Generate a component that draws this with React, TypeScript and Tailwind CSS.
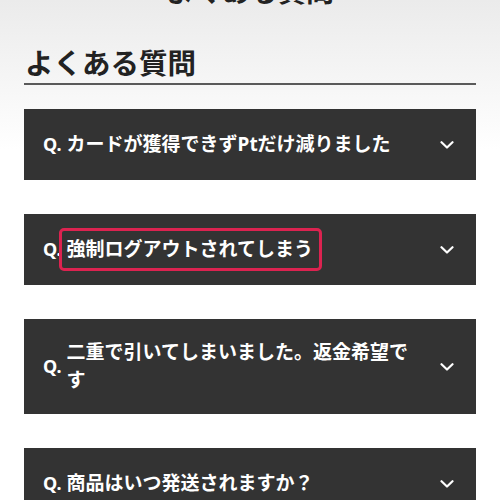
const faqs = [
  "カードが獲得できずPtだけ減りました",
  "強制ログアウトされてしまう",
  "二重で引いてしまいました。返金希望です",
  "商品はいつ発送されますか？",
]

function Chevron() {
  return (
    <svg width="14" height="8" viewBox="0 0 14 8" fill="none" className="shrink-0">
      <polyline points="1.5,1.2 7,6.5 12.5,1.2" stroke="#fff" strokeWidth="2.2" strokeLinecap="round" strokeLinejoin="round" />
    </svg>
  )
}

export default function App() {
  return (
    <div
      className="w-[500px] h-[500px] overflow-hidden bg-linear-to-b from-[#ebebeb] via-white via-30% to-white text-[#222]"
      style={{ fontFamily: '"Noto Sans", "Noto Sans CJK JP", sans-serif' }}
    >
      <h1 className="mt-[-23px] text-center text-[28px] font-bold leading-none">よくある質問</h1>

      <div className="px-6 mt-[44px]">
        <h2 className="text-[28.5px] font-bold leading-[28px] pb-[6px] pl-px border-b-2 border-[#5a5a5a]">よくある質問</h2>

        <div className="mt-[24px] flex flex-col gap-[34px]">
          {faqs.map((q, i) => (
            <div key={q} className="bg-[#333333] min-h-[71px] flex items-center pl-[19px] pr-[22px] py-5 text-white">
              <span className="text-[18px] font-bold leading-[27.5px] mr-[5px] shrink-0">Q.</span>
              <span className="flex-1 mr-[18px] text-[19px] font-bold leading-[27.5px]">
                {i === 1 ? (
                  <span className="relative inline-block">
                    {q}
                    <span className="absolute -top-[8px] -bottom-[8px] -left-[8px] -right-[9px] border-[3px] border-[#dc2350] rounded-[5px]" />
                  </span>
                ) : (
                  q
                )}
              </span>
              <Chevron />
            </div>
          ))}
        </div>
      </div>
    </div>
  )
}
